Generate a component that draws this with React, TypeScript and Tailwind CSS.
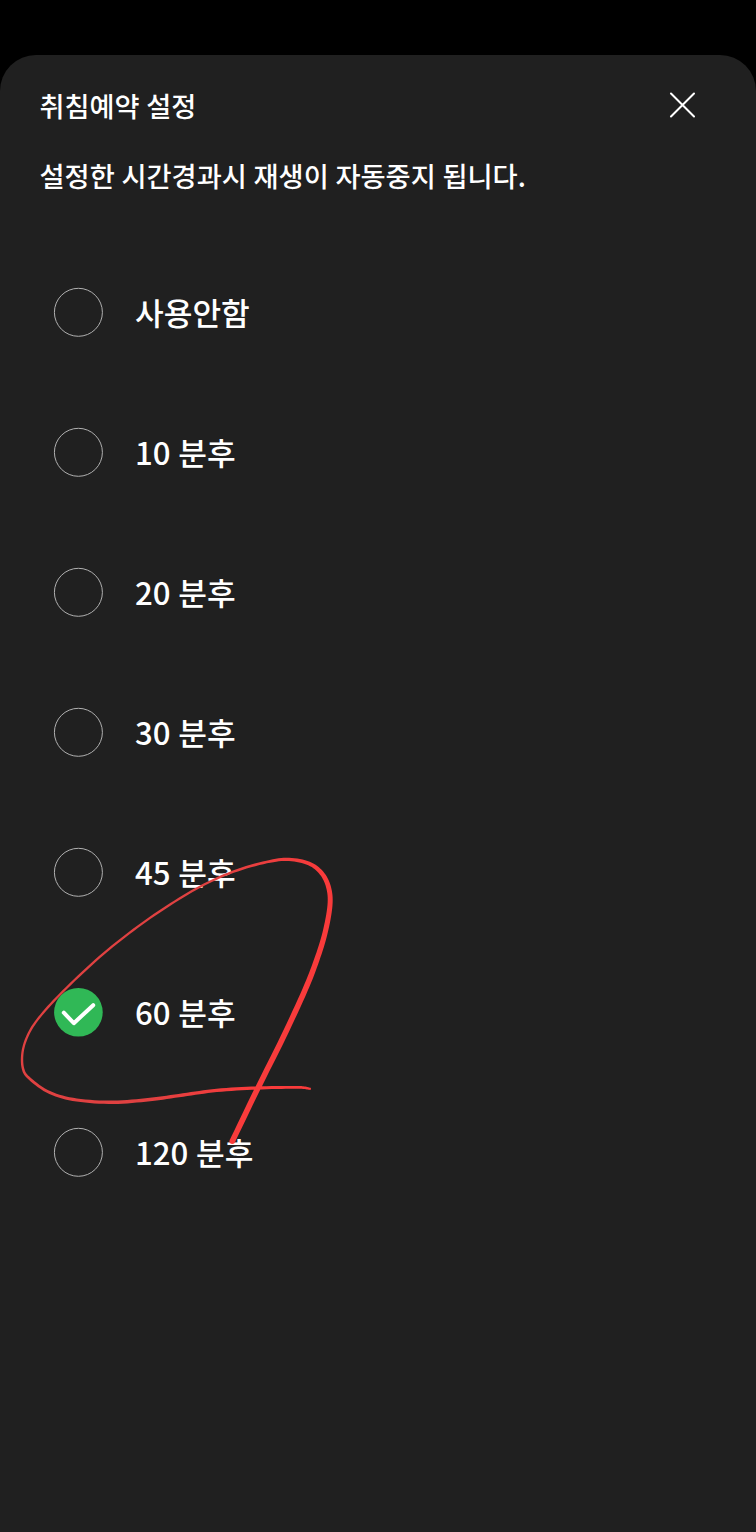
type Option = { label: string; selected?: boolean };

const options: Option[] = [
  { label: "사용안함" },
  { label: "10 분후" },
  { label: "20 분후" },
  { label: "30 분후" },
  { label: "45 분후" },
  { label: "60 분후", selected: true },
  { label: "120 분후" },
];

// Pen stroke samples: x, y, pen width
const pen: [number, number, number][] = [
  [232.3, 1141.2, 5.6], [256.7, 1090.5, 5.6], [283.3, 1037, 5.6], [305, 990, 5.6],
  [316.7, 960, 5.4], [325, 933, 5.2], [330, 905, 5], [328.5, 887, 4.8],
  [321.5, 873, 4.4], [309, 863.5, 3.8], [289, 859.4, 3.3], [266.7, 862, 2.8],
  [233.3, 871.7, 2.5], [200, 886.7, 2.3], [166.7, 906.7, 2.3], [133.3, 930, 2.3],
  [100, 956.7, 2.3], [66.7, 987.7, 2.3], [43.3, 1012.5, 2.3], [30, 1031, 2.3],
  [22.9, 1050, 2.3], [22.9, 1068.3, 2.5], [30, 1079, 2.7], [50, 1092.7, 3],
  [76.7, 1100, 3.1], [113.3, 1102.3, 3.4], [150, 1099.5, 3.4], [183, 1095, 3.4],
  [216.7, 1090.4, 3.4], [256.7, 1088, 3.2], [293, 1087.3, 2.8], [304, 1087.7, 2.6],
  [310.8, 1089, 2.2],
];

const spline = (a: number, b: number, c: number, d: number, t: number) =>
  0.5 * (2 * b + (c - a) * t + (2 * a - 5 * b + 4 * c - d) * t * t + (3 * b - a - 3 * c + d) * t * t * t);

// Smooth the samples and widen them into a closed ribbon
function ribbon(): string {
  const pts: number[][] = [];
  for (let i = 0; i < pen.length - 1; i++) {
    const p = [pen[Math.max(0, i - 1)], pen[i], pen[i + 1], pen[Math.min(pen.length - 1, i + 2)]];
    for (let s = 0; s < 8; s++) {
      pts.push([0, 1, 2].map((k) => spline(p[0][k], p[1][k], p[2][k], p[3][k], s / 8)));
    }
  }
  pts.push([...pen[pen.length - 1]]);
  const left: string[] = [];
  const right: string[] = [];
  pts.forEach(([x, y, w], i) => {
    const a = pts[Math.max(0, i - 1)];
    const b = pts[Math.min(pts.length - 1, i + 1)];
    const len = Math.hypot(b[0] - a[0], b[1] - a[1]) || 1;
    const nx = ((a[1] - b[1]) / len) * (w / 2);
    const ny = ((b[0] - a[0]) / len) * (w / 2);
    left.push(`${(x + nx).toFixed(2)},${(y + ny).toFixed(2)}`);
    right.unshift(`${(x - nx).toFixed(2)},${(y - ny).toFixed(2)}`);
  });
  return `M${left.join("L")}L${right.join("L")}Z`;
}

function Radio({ selected }: { selected?: boolean }) {
  return (
    <svg className="size-[50px] shrink-0" viewBox="0 0 50 50" fill="none">
      {selected ? (
        <>
          <circle cx="25.4" cy="25.2" r="24.3" fill="#30b856" />
          <path d="M10.8 25.7 20.8 36.2 40.2 18.2" stroke="#fff" strokeWidth="4" strokeLinecap="round" strokeLinejoin="round" />
        </>
      ) : (
        <circle cx="25.4" cy="25.3" r="24" stroke="#b0b0b0" strokeWidth="1" />
      )}
    </svg>
  );
}

export default function App() {
  return (
    <div className="relative flex h-[1532px] w-[756px] flex-col overflow-hidden bg-black pt-[55px] font-['Noto_Sans_CJK_KR',sans-serif] font-medium text-white">
      <main className="flex-1 rounded-t-[36px] bg-[#202020] pt-[30px]">
        <header className="flex h-10 items-center justify-between pr-[61px] pl-[39.5px]">
          <h1 className="text-[27.2px] leading-10 font-medium [word-spacing:0.5px]">취침예약 설정</h1>
          <button aria-label="닫기" className="size-[26px]">
            <svg className="size-[26px]" viewBox="0 0 26 26" fill="none">
              <path d="M2 1.5l23 23M25 1.5l-23 23" stroke="#fff" strokeWidth="2" strokeLinecap="round" />
            </svg>
          </button>
        </header>
        <p className="mt-[30px] pl-[39.5px] text-[27.25px] leading-10 [word-spacing:0.6px]">설정한 시간경과시 재생이 자동중지 됩니다.</p>
        <ul className="mt-[47px]">
          {options.map((o) => (
            <li key={o.label} className="flex h-[140px] items-center gap-8 pl-[53px]">
              <Radio selected={o.selected} />
              <span className="text-[31.2px] leading-10 [word-spacing:0.7px]">{o.label}</span>
            </li>
          ))}
        </ul>
      </main>
      <svg className="pointer-events-none absolute inset-0 h-[1532px] w-[756px]" viewBox="0 0 756 1532">
        <defs>
          <linearGradient id="ink" gradientUnits="userSpaceOnUse" x1="180" y1="980" x2="275" y2="1010">
            <stop offset="0" stopColor="#e04141" />
            <stop offset="1" stopColor="#f93b3b" />
          </linearGradient>
        </defs>
        <path d={ribbon()} fill="url(#ink)" />
        <circle cx="232.3" cy="1141.2" r="2.8" fill="#f93b3b" />
      </svg>
    </div>
  );
}
